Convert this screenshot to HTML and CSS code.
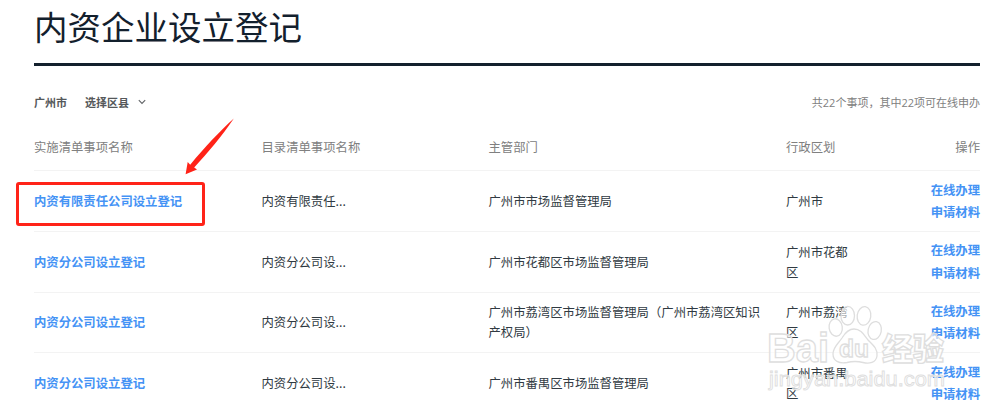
FILE: index.html
```
<!DOCTYPE html>
<html lang="zh-CN">
<head>
	<meta charset="utf-8" />
	<title>内资企业设立登记</title>
	<link rel="stylesheet" href="styles.css">
</head>

<body>
	<div class="contenedor">
		<h1 class="titulo">内资企业设立登记</h1>

		<div class="filtro">
			<div class="zona">
				<span>广州市</span>
				<span class="distrito">选择区县
					<svg class="flecha" viewBox="0 0 8 6" width="8" height="6"><path d="M0.8 1.2 L4 4.4 L7.2 1.2" /></svg>
				</span>
			</div>
			<div class="total">共<span>22</span>个事项，其中<span>22</span>项可在线申办</div>
		</div>

		<table class="tabla">
			<colgroup>
				<col class="c_nombre">
				<col class="c_lista">
				<col class="c_depto">
				<col class="c_region">
				<col>
			</colgroup>
			<thead>
				<tr>
					<th>实施清单事项名称</th>
					<th>目录清单事项名称</th>
					<th>主管部门</th>
					<th>行政区划</th>
					<th class="acciones">操作</th>
				</tr>
			</thead>
			<tbody>
				<tr>
					<td><a href="#">内资有限责任公司设立登记</a></td>
					<td>内资有限责任...</td>
					<td>广州市市场监督管理局</td>
					<td>广州市</td>
					<td class="acciones"><a href="#">在线办理</a><a href="#">申请材料</a></td>
				</tr>
				<tr>
					<td><a href="#">内资分公司设立登记</a></td>
					<td>内资分公司设...</td>
					<td>广州市花都区市场监督管理局</td>
					<td>广州市花都区</td>
					<td class="acciones"><a href="#">在线办理</a><a href="#">申请材料</a></td>
				</tr>
				<tr>
					<td><a href="#">内资分公司设立登记</a></td>
					<td>内资分公司设...</td>
					<td>广州市荔湾区市场监督管理局（广州市荔湾区知识产权局）</td>
					<td>广州市荔湾区</td>
					<td class="acciones"><a href="#">在线办理</a><a href="#">申请材料</a></td>
				</tr>
				<tr>
					<td><a href="#">内资分公司设立登记</a></td>
					<td>内资分公司设...</td>
					<td>广州市番禺区市场监督管理局</td>
					<td>广州市番禺区</td>
					<td class="acciones"><a href="#">在线办理</a><a href="#">申请材料</a></td>
				</tr>
			</tbody>
		</table>
	</div>

	<!-- marca roja sobre la primera fila -->
	<svg class="marca" viewBox="0 0 230 120" width="230" height="120">
		<rect x="7.5" y="72.6" width="186" height="40.8" rx="1.5" />
		<path d="M223.8 7.6 C210 20 195 36 180.2 53.8 L177.7 51 L175.6 63.2 L187 58.6 L184.2 56.4 C198 42 212 25 223.8 7.6 Z" />
	</svg>

	<!-- marca de agua -->
	<svg class="agua" viewBox="0 0 200 100" width="200" height="100">
		<text x="4" y="61.5" class="bai" textLength="62" lengthAdjust="spacingAndGlyphs">Bai</text>
		<ellipse cx="72.7" cy="27.5" rx="6.6" ry="8.8" transform="rotate(-8 72.7 27.5)" />
		<ellipse cx="84.7" cy="15.7" rx="6.8" ry="9.3" />
		<ellipse cx="101" cy="15.9" rx="6.8" ry="9.3" transform="rotate(8 101 15.9)" />
		<ellipse cx="111.7" cy="30.5" rx="6.6" ry="9" transform="rotate(12 111.7 30.5)" />
		<path d="M91 29 C98 29 101 35 105 40 C110 45 115 49 114 56 C113 63 106 64 100 62.5 C94 61 90 61 84 62.5 C76 64 70 61 70 54 C70 47 75 44 79 38 C82 33 86 29 91 29 Z" />
		<text x="76" y="56.5" class="du" textLength="30" lengthAdjust="spacingAndGlyphs">du</text>
		<text x="119" y="60" class="jingyan" textLength="62">经验</text>
		<text x="6" y="85.7" class="url" textLength="176" lengthAdjust="spacingAndGlyphs">jingyan.baidu.com</text>
	</svg>
</body>
</html>
```
FILE: styles.css
```
body {
	margin: 0;
	height: 413px;
	overflow: hidden;
	position: relative;
	background-color: #ffffff;
	font-family: "Noto Sans CJK SC", sans-serif;
	color: #303a42;
}

.contenedor {
	margin: 0 20px 0 34px;
}

.titulo {
	margin: 0;
	height: 63px;
	line-height: 52px;
	font-size: 33.5px;
	font-weight: normal;
	color: #13202d;
	border-bottom: 3px solid #13202d;
}

.filtro {
	display: flex;
	justify-content: space-between;
	align-items: center;
	height: 58px;
	padding-top: 14px;
	box-sizing: border-box;
	font-size: 11px;
}

.zona {
	display: flex;
	gap: 18px;
	font-weight: bold;
	color: #55585a;
}

.distrito {
	display: flex;
	align-items: center;
	gap: 9px;
}

.flecha path {
	fill: none;
	stroke: #606366;
	stroke-width: 1.1;
}

.total {
	color: #808080;
}

.total span {
	font-family: "Open Sans", sans-serif;
}

.tabla {
	width: 946px;
	table-layout: fixed;
	border-collapse: separate;
	border-spacing: 0;
	font-size: 12.35px;
	line-height: 20px;
}

.c_nombre {
	width: 227.5px;
}

.c_lista {
	width: 227px;
}

.c_depto {
	width: 297.5px;
}

.c_region {
	width: 84px;
}

.tabla th {
	height: 47px;
	padding: 0;
	box-sizing: border-box;
	font-weight: normal;
	text-align: left;
	color: #808080;
	border-bottom: 1px solid #f3f3f3;
}

.tabla td {
	height: 60.75px;
	padding: 0 20px 0 0;
	box-sizing: border-box;
	border-bottom: 1px solid #f3f3f3;
}

.tabla tr:last-child td {
	border-bottom-color: #ffffff;
}

.tabla tr:first-child th {
	border-bottom-color: #f3f3f3;
}

.tabla a {
	color: #4593f5;
	font-weight: bold;
	text-decoration: none;
}

.tabla .acciones {
	padding: 0;
	text-align: right;
	line-height: 22.3px;
}

.acciones a {
	display: block;
}

.marca {
	position: absolute;
	left: 10px;
	top: 111px;
}

.marca rect {
	fill: none;
	stroke: #ff2318;
	stroke-width: 3;
}

.marca path {
	fill: #ff2318;
}

.agua {
	position: absolute;
	left: 763px;
	top: 300px;
	fill: rgba(255, 255, 255, 0.6);
	stroke: #dedede;
	stroke-width: 1.3;
	font-family: "Liberation Sans", "Noto Sans CJK SC", sans-serif;
}

.bai {
	font-size: 41px;
	font-weight: bold;
}

.du {
	font-size: 24px;
	font-weight: bold;
}

.jingyan {
	font-size: 31px;
	font-weight: 900;
}

.url {
	font-size: 21px;
	stroke-width: 0.9;
}
```
